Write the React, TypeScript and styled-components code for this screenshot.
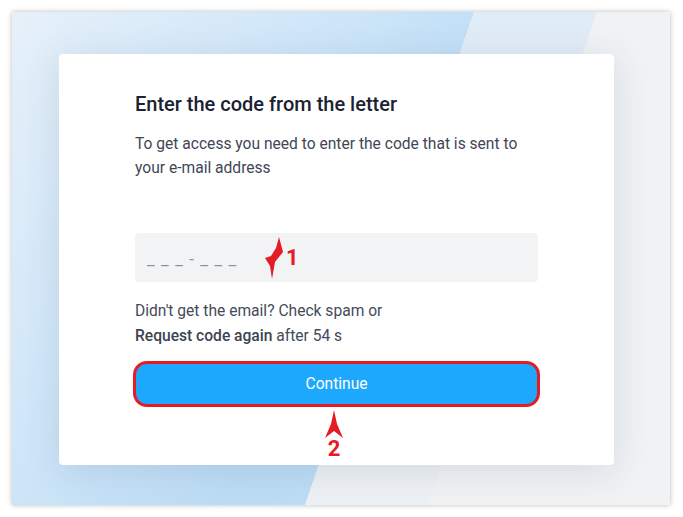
import styled, { createGlobalStyle } from "styled-components";

const GlobalStyle = createGlobalStyle`
  body {
    margin: 0;
    background: #ffffff;
    font-family: Roboto, "Liberation Sans", sans-serif;
  }
`;

const RED = "#e41c24";

const Page = styled.div`
  width: 683px;
  height: 517px;
  padding: 12px 13px 12px 12px;
  box-sizing: border-box;
`;

const Frame = styled.div`
  position: relative;
  width: 658px;
  height: 493px;
  box-sizing: border-box;
  padding: 42px 56px 40px 47px;
  box-shadow: 0 0 5px rgba(0, 0, 0, 0.28);
  background:
    linear-gradient(108.9deg, transparent 437px, #f0f2f4 437px),
    linear-gradient(
      125deg,
      #e6f0f9 0%,
      #d0e7f9 30%,
      #bcdcf5 55%,
      #c3e0f6 100%
    );

  /* lighter stripe between the blue and the grey part */
  &::before {
    content: "";
    position: absolute;
    inset: 0;
    clip-path: polygon(462px 0, 585px 0, 416px 493px, 293px 493px);
    background: linear-gradient(to bottom, #e0ecf6 0%, #e6edf3 45%, #eef1f4 100%);
  }
`;

const Card = styled.div`
  position: relative;
  z-index: 1;
  height: 411px;
  box-sizing: border-box;
  padding: 38px 76px 0 76px;
  background: #ffffff;
  border-radius: 4px;
  box-shadow: 0 6px 36px rgba(60, 80, 110, 0.14);
`;

const Title = styled.h1`
  margin: 0;
  font-size: 20px;
  line-height: 25px;
  font-weight: 500;
  color: #1b2231;
`;

const Lead = styled.p`
  margin: 15px 0 0;
  font-size: 15.6px;
  line-height: 24px;
  color: #3f4756;
`;

const CodeField = styled.div`
  position: relative;
  margin-top: 53px;
  height: 49px;
  display: flex;
  align-items: center;
  padding-left: 12px;
  background: #f2f3f5;
  border-radius: 4px;
`;

const Placeholder = styled.span`
  font-size: 17px;
  letter-spacing: 6.4px;
  color: #8c9199;
  padding-top: 3px;
`;

const Help = styled.div`
  margin-top: 17px;
  font-size: 15.6px;
  line-height: 25px;
  color: #444b59;
`;

const Strong = styled.b`
  font-weight: 500;
  color: #3c4452;
`;

const ButtonWrap = styled.div`
  position: relative;
  margin: 12px -2px 0;
`;

const Button = styled.button`
  display: block;
  width: 100%;
  height: 46px;
  border: 3px solid ${RED};
  border-radius: 14px;
  background: #1ea8fd;
  color: #ffffff;
  font-family: Roboto, "Liberation Sans", sans-serif;
  font-size: 15.6px;
  cursor: pointer;
`;

const Marker = styled.div<{ $left: number; $top: string }>`
  position: absolute;
  left: ${(p) => p.$left}px;
  top: ${(p) => p.$top};
  display: flex;
  align-items: center;
  gap: 2px;
`;

const MarkerStack = styled(Marker)`
  flex-direction: column;
  gap: 0;
`;

const MarkerNum = styled.span`
  font-family: Roboto, "Liberation Sans", sans-serif;
  font-weight: 700;
  font-size: 22px;
  line-height: 22px;
  color: ${RED};
`;

export default function App() {
  return (
    <>
      <GlobalStyle />
      <Page>
        <Frame>
          <Card>
            <Title>Enter the code from the letter</Title>
            <Lead>
              To get access you need to enter the code that is sent to
              <br />
              your e-mail address
            </Lead>
            <CodeField>
              <Placeholder>___-___</Placeholder>
              <Marker $left={129} $top="3px">
                <svg width="20" height="44" viewBox="0 0 20 44">
                  <polygon
                    points="15,1 19,16 11,26 8,43 6,30 1,22 7,20 12,12"
                    fill={RED}
                  />
                </svg>
                <MarkerNum>1</MarkerNum>
              </Marker>
            </CodeField>
            <Help>
              Didn't get the email? Check spam or
              <br />
              <Strong>Request code again</Strong> after 54 s
            </Help>
            <ButtonWrap>
              <Button>Continue</Button>
              <MarkerStack $left={191} $top="calc(100% + 3px)">
                <svg width="20" height="28" viewBox="0 0 20 28">
                  <polygon points="10,0 13,14 19,28 10,21 1,28 7,14" fill={RED} />
                </svg>
                <MarkerNum>2</MarkerNum>
              </MarkerStack>
            </ButtonWrap>
          </Card>
        </Frame>
      </Page>
    </>
  );
}
